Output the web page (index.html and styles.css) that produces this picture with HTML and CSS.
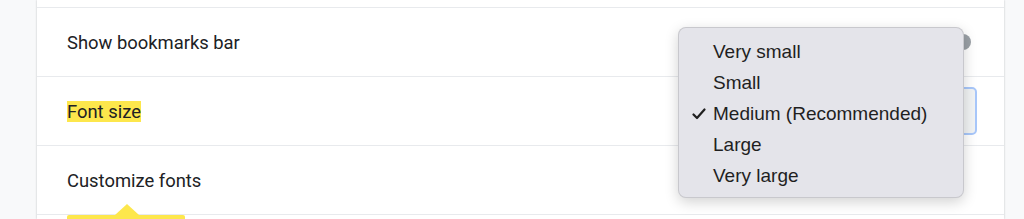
FILE: index.html
```html
<!DOCTYPE html>
<html lang="en">
<head>
    <meta charset="UTF-8">
    <title>Appearance</title>
    <link rel="stylesheet" href="styles.css">
</head>
<body>
    <div class="page">
        <div class="card">
            <div class="row">
                <span class="label">Show bookmarks bar</span>
                <span class="toggle"><span class="knob"></span></span>
            </div>
            <div class="row">
                <span class="label highlight">Font size</span>
                <span class="select"></span>
            </div>
            <div class="row">
                <span class="label">Customize fonts</span>
            </div>
            <div class="row"></div>
        </div>
    </div>

    <!-- callout under "Customize fonts" -->
    <div class="callout"></div>

    <!-- native select popup -->
    <ul class="menu">
        <li>Very small</li>
        <li>Small</li>
        <li class="checked">
            <svg class="check" width="14" height="12" viewBox="0 0 14 12">
                <path d="M1.5 6.5 L5 10 L12.5 1.5" fill="none" stroke="#1f1f1f" stroke-width="2.2" stroke-linecap="round" stroke-linejoin="round"/>
            </svg>
            Medium (Recommended)
        </li>
        <li>Large</li>
        <li>Very large</li>
    </ul>
</body>
</html>
```

FILE: styles.css
```css
body {
    margin: 0;
    background-color: #f8f9fa;
    font-family: Roboto, Arial, sans-serif;
    color: #202124;
    height: 219px;
    overflow: hidden;
}
.page {
    padding-left: 37px;
    width: 967px;
}
.card {
    background-color: #ffffff;
    box-shadow: 0 0 2px rgba(60, 64, 67, 0.3);
    padding-top: 7px;
    height: 212px;
    overflow: hidden;
}
.row {
    display: flex;
    align-items: center;
    justify-content: space-between;
    height: 68px;
    border-top: 1px solid #e8eaed;
    padding: 0 27px 0 30px;
}
.label {
    font-size: 18.4px;
}
.highlight {
    background-color: #fde74c;
}
.toggle {
    width: 16px;
    height: 16px;
    margin-right: 6px;
}
.knob {
    display: block;
    width: 16px;
    height: 16px;
    border-radius: 50%;
    background-color: #9aa0a6;
}
.select {
    width: 200px;
    height: 44px;
    border: 2px solid #a8c7fa;
    border-radius: 5px;
    background-color: #f1f3f4;
}
.callout {
    position: absolute;
    left: 67px;
    top: 215px;
    width: 118px;
    height: 4px;
    background-color: #fde74c;
    border-radius: 2px 2px 0 0;
}
.callout::before {
    content: "";
    position: absolute;
    left: 48px;
    top: -11px;
    border-left: 12px solid transparent;
    border-right: 12px solid transparent;
    border-bottom: 11px solid #fde74c;
}
.menu {
    position: absolute;
    left: 678px;
    top: 27px;
    width: 286px;
    height: 171px;
    margin: 0;
    padding: 8px 0 7px;
    list-style: none;
    background-color: #e4e4ea;
    border: 1px solid rgba(0, 0, 0, 0.12);
    border-radius: 8px;
    box-shadow: 0 4px 14px rgba(0, 0, 0, 0.18);
    box-sizing: border-box;
    font-family: "Liberation Sans", Arial, sans-serif;
    font-size: 19px;
    color: #1f1f1f;
}
.menu li {
    position: relative;
    height: 31px;
    line-height: 31px;
    padding-left: 34px;
}
.check {
    position: absolute;
    left: 13px;
    top: 10px;
}
```
